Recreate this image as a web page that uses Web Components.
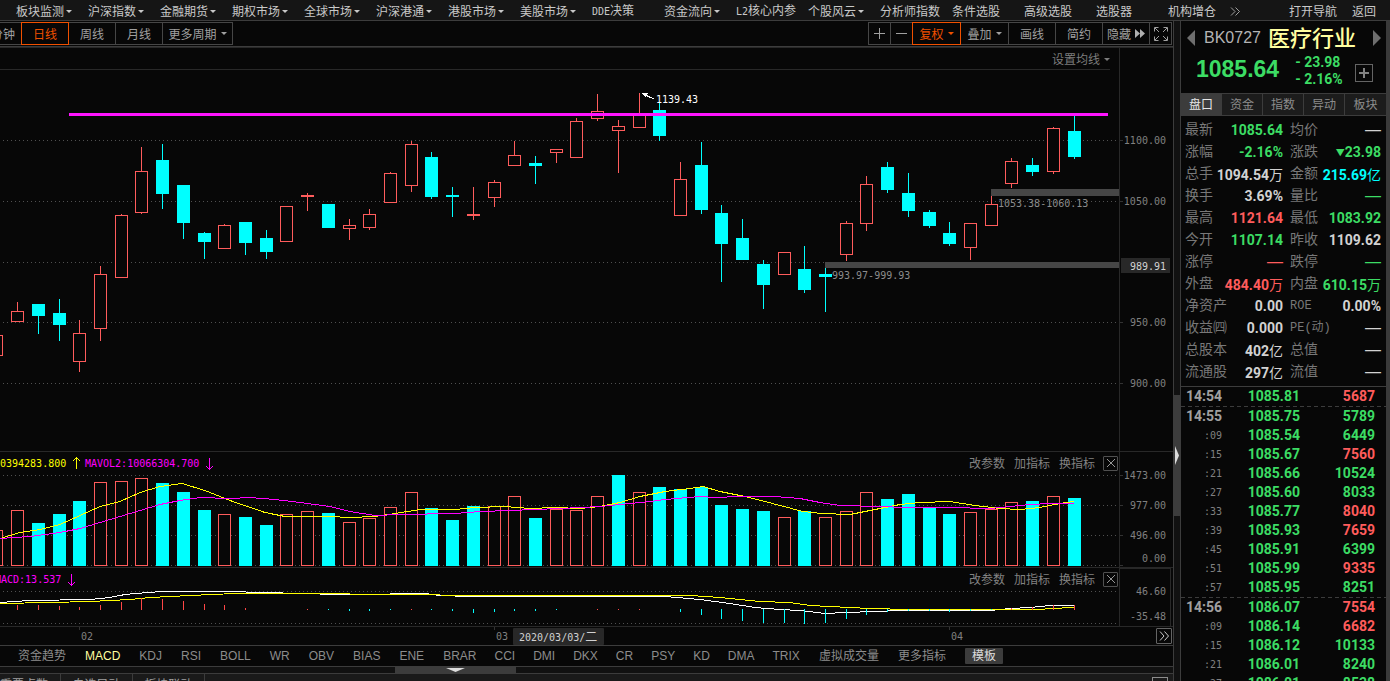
<!DOCTYPE html>
<html lang="zh-CN">
<head>
<meta charset="utf-8">
<title>医疗行业 BK0727</title>
<style>
  html, body { margin: 0; height: 100%; background: #070707; overflow: hidden; }
  body {
    font: 12px/16px "Noto Sans CJK SC", sans-serif;
    color: #a0a0a0;
    --line: #3c3c3c; --line2: #282828; --up: #ff5c5c; --down: #3cdc64; --cyan: #00ffff;
    --orange: #f05000; --num: "DejaVu Sans Mono", monospace; --bold: Roboto, "Noto Sans CJK SC", sans-serif;
  }
</style>
</head>
<body>
<trade-app></trade-app>
<script>
const define = (name, css, html, setup) => {
  customElements.define(name, class extends HTMLElement {
    constructor() {
      super();
      const root = this.attachShadow({ mode: 'open' });
      root.innerHTML = `<style>
        :host{display:block;box-sizing:border-box}
        *{box-sizing:border-box}
        button{font:inherit;color:inherit;background:none;border:0;padding:0;margin:0;white-space:nowrap}
        a{color:inherit;text-decoration:none;white-space:nowrap}
        svg{display:block}
        svg text{font:10px var(--num);white-space:pre}
        .lat{font-family:var(--num);font-size:10px}
        ${css}</style>${typeof html === 'function' ? html(this) : html}`;
      if (setup) setup(root, this);
    }
  });
};
const latin = t => t.replace(/^[A-Z0-9]+/, m => `<span class="lat">${m}</span>`);

/* small drop-down arrow */
define('drop-caret', ':host{flex:none;width:0;height:0;border:3px solid transparent;border-top-color:currentColor;border-bottom:0}', '');

/* main menu */
const MENU = ['板块监测▾','沪深指数▾','金融期货▾','期权市场▾','全球市场▾','沪深港通▾','港股市场▾','美股市场▾','DDE决策','资金流向▾','L2核心内参','个股风云▾','分析师指数','条件选股','高级选股','选股器','机构增仓'];
define('top-menu', `
  :host{height:21px;background:#151515;border-bottom:1px solid var(--line);color:#c8c8c8}
  nav{display:flex;height:20px;align-items:center;padding:2px 14px 0 16px}
  a{flex:0 0 72px;display:flex;align-items:center;gap:2px}
  a:nth-of-type(17){flex-basis:62px}
  .more{flex:1;display:flex}
  .end{flex:none;margin-left:15px}`,
  `<nav>${MENU.map(m => `<a href="#"><span>${latin(m.replace('▾',''))}</span>${m.endsWith('▾') ? '<drop-caret></drop-caret>' : ''}</a>`).join('')}
   <button class="more" aria-label="更多"><svg width="10" height="9" fill="none" stroke="#a0a0a0"><path d="M1 .5l4 4-4 4M5.500 .5l4 4-4 4"/></svg></button>
   <a class="end" href="#">打开导航</a><a class="end" href="#">返回</a></nav>`);

/* period switch and chart tools */
define('period-bar', `
  :host{height:27px;border-bottom:1px solid var(--line2);display:flex;justify-content:space-between;padding:1px 1px 0 0;overflow:hidden;background:#070707}
  :host{box-shadow:inset 0 -1px 0 var(--line)}
  div{display:flex}
  button{height:23px;border:1px solid #464646;width:48px;margin-left:-1px;display:flex;align-items:center;justify-content:center;position:relative;gap:4px}
  .on{color:var(--orange);border-color:var(--orange);z-index:1}
  .w23{width:23px}.w49{width:49px}.w71{width:71px}
  .cut{width:23px;justify-content:flex-end;padding-right:6px}`,
  `<div><button class="cut">分钟</button><button class="on">日线</button><button>周线</button><button>月线</button><button class="w71">更多周期<drop-caret></drop-caret></button></div>
   <div><button class="w23" aria-label="放大"><svg width="11" height="11" stroke="#a0a0a0"><path d="M0 5.500h11M5.500 0v11"/></svg></button>
   <button class="w23" aria-label="缩小"><svg width="11" height="11" stroke="#a0a0a0"><path d="M0 5.500h11"/></svg></button>
   <button class="on w49">复权<drop-caret></drop-caret></button><button class="w49">叠加<drop-caret></drop-caret></button><button>画线</button><button>简约</button>
   <button>隐藏<svg width="10" height="9" fill="#b0b0b0"><path d="M0 0l5 4.500-5 4.500zM5 0l5 4.500-5 4.500z"/></svg></button>
   <button class="w23" aria-label="全屏"><svg width="14" height="14" fill="none" stroke="#a0a0a0"><path d="M.5 4.500v-4h4M9.500 .5h4v4M13.500 9.500v4h-4M4.500 13.500h-4v-4M1 1l4 4M13 1l-4 4M13 13l-4-4M1 13l4-4"/></svg></button></div>`);

/* chart data: x, body top, body bottom, high, low */
const CANDLES = [
[-10,335,356,335,356],[11,311,322,302,322],[32,304,316,304,334],[53,313,325,299,341],[73,333,362,320,372],[94,274,329,266,341],
[115,215,278,214,278],[135,171,213,147,214],[156,160,194,144,209],[177,185,223,185,239],[198,233,242,232,259],[218,225,249,224,249],
[239,222,243,222,255],[260,238,252,230,259],[280,206,242,206,242],[301,195,197,193,211],[322,204,228,204,228],[343,225,229,219,240],
[363,214,228,209,230],[384,173,203,172,203],[405,144,186,141,192],[425,157,197,152,199],[446,195,197,187,217],[467,214,216,187,220],
[488,182,198,180,207],[508,155,166,141,166],[529,163,166,156,184],[550,149,153,149,163],[570,121,158,118,158],[591,111,119,94,121],
[612,126,131,120,173],[633,114,128,93,128],[653,110,136,103,141],[674,179,216,162,216],[695,165,210,142,214],[715,213,244,205,282],
[736,238,260,219,260],[757,264,285,260,309],[778,252,275,252,275],[798,269,290,246,293],[819,274,277,268,312],[840,223,255,221,261],
[860,184,224,176,231],[881,167,190,162,193],[902,193,211,173,217],[923,212,226,210,228],[943,233,244,222,246],[964,223,248,223,260],
[985,204,226,196,226],[1005,161,184,158,188],[1026,165,172,158,176],[1047,128,172,127,174],[1068,131,157,116,159]];
const KIND = 'RRCCRRRRCCCRCCRRCRRRRCCRRRCRRRRRCRCCCCRCCRRCCCCRRRCRC';
const VOL = [530,510,523,514,501,482,481,478,483,492,510,514,517,525,514,511,513,522,518,507,492,508,520,506,506,496,518,509,510,496,475,492,487,489,487,505,509,511,517,511,517,511,492,499,494,508,514,512,509,502,501,496,498];
const VKIND = 'RRCCCRRRCCCRCCRRCRRRRCCCRRCRRRCRCCCCCCRCRRRCCCCRRRCRC';
const RED = '#ff5c5c', CY = '#00ffff';
const box = (x, t, b, c) => c === 'C' ? `<rect x="${x}" y="${t}" width="13" height="${b - t}" fill="${CY}"/>`
  : `<rect x="${x + .5}" y="${t + .5}" width="12" height="${b - t - 1}" fill="#070707" stroke="${RED}"/>`;
const grid = ys => ys.map(y => `<line x1="3" x2="100%" y1="${y + .5}" y2="${y + .5}" stroke="#505050" stroke-dasharray="1 3"/>`).join('');
const poly = (pts, c) => `<polyline points="${pts}" fill="none" stroke="${c}"/>`;
const axisText = rows => rows.map(([y, t]) => `<text x="46" y="${y + 4}" text-anchor="end" fill="#808080">${t}</text>`).join('');
const ticks = ys => ys.map(y => `<path d="M0 ${y + .5}h3" stroke="#323232"/>`).join('');
const paneCss = `
  :host{display:grid;grid-template-columns:minmax(0,1fr) 54px;position:relative;min-height:0;overflow:hidden}
  svg{width:100%;height:100%;shape-rendering:crispEdges}
  .axis{border-left:1px solid var(--line2);min-width:0}`;

define('price-pane', paneCss + `
  button{position:absolute;top:3px;right:63px;display:flex;align-items:center;gap:4px;color:#7d7d7d}`,
  () => `<svg><g transform="translate(0,-48)"><path d="M0 69.500H1110" stroke="#282828"/>${grid([140,201,262,322,383])}
  ${CANDLES.map(([x, t, b, h, l], i) => `<rect x="${x + 6}" y="${h}" width="1" height="${l - h}" fill="${KIND[i] === 'C' ? CY : RED}"/>` + box(x, t, b, KIND[i])).join('')}
  <rect x="991" y="189" width="100%" height="7" fill="#464646"/><rect x="825" y="262" width="100%" height="6" fill="#464646"/>
  <text x="998" y="207" fill="#8c8c8c">1053.38-1060.13</text><text x="832" y="279" fill="#8c8c8c">993.97-999.93</text>
  <rect x="69" y="113" width="1039" height="3" fill="#ff14ff"/>
  <path d="M643 94l11 5" stroke="#fff"/><path d="M641 93h7l-2 4z" fill="#fff"/><text x="656" y="103" fill="#fff">1139.43</text></g></svg>
  <div class="axis"><svg><g transform="translate(0,-48)">${ticks([140,201,322,383])}${axisText([[140,'1100.00'],[201,'1050.00'],[322,'950.00'],[383,'900.00']])}
  <rect x="1" y="258" width="49" height="15" rx="1" fill="#282828"/><text x="46" y="270" text-anchor="end" fill="#d2d2d2">989.91</text></g></svg></div>
  <button>设置均线<drop-caret></drop-caret></button>`);

/* 改参数 / 加指标 / 换指标 controls over an indicator pane */
define('pane-tools', `
  :host{position:absolute;top:3px;right:55px;display:flex;align-items:center;gap:9px;color:#828282}
  .x{width:15px;height:15px;border:1px solid #505050;border-radius:1px;display:grid;place-items:center;margin-left:-1px}`,
  `<button>改参数</button><button>加指标</button><button>换指标</button><button class="x" aria-label="关闭"><svg width="8" height="8" stroke="#969696"><path d="M0 0l8 8M8 0l-8 8"/></svg></button>`);

const arrow = (x, y, c, down) => `<path transform="translate(${x},${y})" d="M.5 0v12M${down ? '-3 8l3.500 3.500 3.500-3.500' : '-3 4l3.500-3.500 3.500 3.500'}" fill="none" stroke="${c}"/>`;
define('volume-pane', paneCss + ':host{border-top:1px solid var(--line2)}',
  () => `<svg><g transform="translate(0,-452)">${grid([475,505,535,565])}
  ${VOL.map((t, i) => box(CANDLES[i][0], t, 566, VKIND[i])).join('')}
  ${poly('0,538.5 20,532.5 40,529.5 60,524.5 80,515.5 100,506.5 120,501.5 140,492.5 160,486.5 182,483.5 205,490.5 230,500.5 265,512.5 285,516.5 330,516.5 350,517.5 375,516.5 395,513.5 420,509.5 455,509.5 475,507.5 505,506.5 530,508.5 555,507.5 580,508.5 590,507.5 600,506.5 620,502.5 640,496.5 665,491.5 690,488.5 703,486.5 720,491.5 745,496.5 765,501.5 780,505.5 803,511.5 822,513.5 850,514.5 875,509.5 900,504.5 920,502.5 950,501.5 975,505.5 1000,508.5 1020,509.5 1040,507.5 1060,503.5 1074,501.5', '#ffff00')}
  ${poly('0,538.5 30,536.5 60,532.5 80,528.5 100,522.5 120,516.5 140,510.5 160,504.5 180,500.5 200,497.5 230,498.5 250,497.5 275,499.5 300,502.5 330,506.5 350,511.5 375,515.5 400,514.5 455,513.5 480,511.5 510,510.5 560,508.5 600,506.5 620,504.5 650,501.5 665,499.5 700,496.5 715,497.5 740,496.5 775,496.5 800,498.5 820,502.5 840,505.5 880,506.5 905,507.5 950,507.5 990,508.5 1010,506.5 1030,504.5 1050,503.5 1074,503.5', '#ff00ff')}
  <text x="0" y="467" fill="#ffff00">0394283.800</text>${arrow(76,457,'#ffff00')}
  <text x="85" y="467" fill="#ff00ff">MAVOL2:10066304.700</text>${arrow(209,458,'#ff00ff',1)}</g></svg>
  <div class="axis"><svg><g transform="translate(0,-452)">${ticks([475,505,535,565])}${axisText([[475,'1473.00'],[505,'977.00'],[535,'496.00'],[558,'0.00']])}</g></svg></div><pane-tools></pane-tools>`);

const MR = [[17,605,610],[38,605,610],[59,606,610],[79,607,610],[100,605,610],[121,602,610],[141,598,610],[162,599,610],[183,601,610],[204,604,610],[224,605,610],[245,608,610],[307,609,610],[411,609,610],[597,609,610],[618,609,610],[639,609,610],[1011,608,610],[1032,607,610],[1053,605,610],[1074,605,610]];
const MC = [[328,610],[349,611],[369,611],[390,610],[431,610],[452,611],[473,613],[494,612],[514,611],[535,611],[556,610],[680,612],[701,615],[721,619],[742,621],[763,623],[784,623],[804,624],[825,623],[846,619],[866,615],[887,612],[908,611],[929,611],[949,612],[970,611],[991,610]];
define('macd-pane', paneCss + ':host{border-top:1px solid var(--line2)} .axis{border:1px solid var(--line2);margin:0 2px 2px 0}',
  () => `<svg><g transform="translate(0,-568)">${grid([591,623])}
  ${poly('0,602.5 30,600.5 90,599.5 110,597.5 125,594.5 135,593.5 150,592.5 160,591.5 235,591.5 256,592.5 310,593.5 330,594.5 380,594.5 400,593.5 425,593.5 440,595.5 470,596.5 560,596.5 665,596.5 700,599.5 730,603.5 755,607.5 780,609.5 800,610.5 825,613.5 845,612.5 875,611.5 900,610.5 990,610.5 1010,608.5 1030,607.5 1050,605.5 1074,605.5', '#fff')}
  ${poly('0,603.5 50,602.5 90,601.5 130,599.5 150,597.5 190,595.5 235,593.5 300,593.5 400,594.5 480,595.5 690,595.5 720,597.5 740,599.5 760,601.5 790,602.5 810,605.5 850,607.5 870,608.5 910,609.5 1040,609.5 1050,608.5 1074,607.5', '#ffff00')}
  ${MR.map(([x, a, b]) => `<rect x="${x}" y="${a}" width="1" height="${b - a}" fill="#ff4646"/>`).join('')}
  ${MC.map(([x, b]) => `<rect x="${x}" y="609" width="1" height="${b - 609}" fill="${CY}"/>`).join('')}
  <text x="-5" y="583" fill="#ff00ff">MACD:13.537</text>${arrow(71,574,'#ff00ff',1)}</g></svg>
  <div class="axis"><svg><g transform="translate(0,-569)">${axisText([[591,'46.60'],[616,'-35.48']])}</g></svg></div><pane-tools></pane-tools>`);

define('date-axis', `
  :host{height:19px;border-top:1px solid var(--line2);position:relative}
  svg{width:100%;height:18px}
  button{position:absolute;right:1px;top:1px;width:16px;height:16px;border:1px solid #646464;border-radius:1px;display:grid;place-items:center}
  button svg{width:10px;height:10px}`,
  `<svg>${[[79,'02'],[494,'03'],[949,'04']].map(([x, t]) => `<path d="M${x + .5} 0v3" stroke="#323232"/><text x="${x + 2}" y="13" fill="#808080">${t}</text>`).join('')}
   <rect x="513" y="1" width="91" height="17" rx="1" fill="#282828"/><text x="519" y="14" fill="#d2d2d2">2020/03/03/<tspan font-size="12" font-family="Noto Sans CJK SC">二</tspan></text></svg>
   <button aria-label="展开"><svg fill="none" stroke="#c8c8c8"><path d="M1 .5l4 4.500-4 4.500M5.500 .5l4 4.500-4 4.500"/></svg></button>`);

const TAB_GROUPS = [['资金趋势','MACD','KDJ','RSI','BOLL','WR','OBV','BIAS','ENE'],['BRAR','CCI','DMI','DKX','CR','PSY','KD','DMA','TRIX'],['虚拟成交量','更多指标','模板']];
define('indicator-tabs', `
  :host{height:21px;border-top:1px solid var(--line);display:flex;align-items:center;gap:19px;padding-left:18px;overflow:hidden;font-family:"Liberation Sans","Noto Sans CJK SC",sans-serif;color:#8c8c8c}
  div{display:flex;gap:19px}
  .g1{gap:18px}
  .on{color:#ffffa0}
  .tpl{background:#3c3c3c;color:#dcdcdc;padding:0 7px;border-radius:1px}`,
  TAB_GROUPS.map((g, i) => `<div class="g${i}">${g.map(t => `<button class="${t === 'MACD' ? 'on' : t === '模板' ? 'tpl' : ''}">${t}</button>`).join('')}</div>`).join(''));

define('pane-scroll', `
  :host{height:7px;border-top:1px solid var(--line);background:#111;padding-left:395px}
  div{width:121px;height:6px;background:#3c3c3c;display:grid;place-items:center}`,
  `<div><svg width="19" height="4" fill="#dcdcdc"><path d="M0 0h19l-9.500 4z"/></svg></div>`);

define('bottom-tabs', `
  :host{height:8px;border-top:1px solid var(--line);background:#1a1a1a;display:flex;overflow:hidden}
  button{width:72px;height:20px;border-right:1px solid var(--line);flex:none}
  button:first-of-type{width:61px;padding-right:12px}
  i{margin-left:auto;margin-right:5px;margin-top:3px;width:16px;height:12px;border:1px solid #8c8c8c}`,
  `<button>重要点数</button><button>自选异动</button><button>板块联动</button><i></i>`);

define('side-splitter', `
  :host{background:#111;display:flex;flex-direction:column}
  .a{flex:374 0 0}.b{flex:121 0 0;background:#3c3c3c;display:flex;align-items:center;padding-left:1px}.c{flex:165 0 0}`,
  `<div class="a"></div><div class="b"><svg width="4" height="19" fill="#dcdcdc"><path d="M0 0l4 9.500-4 9.500z"/></svg></div><div class="c"></div>`);

/* quote header */
define('quote-head', `
  :host{height:72px;padding:0 5px 0 6px;display:grid;grid-template-rows:34px 38px}
  .r{display:flex;align-items:center}
  .low{align-items:flex-start}
  .code{font:16px/20px "Liberation Sans",sans-serif;color:#b4b4b4;margin-left:9px}
  .name{font-size:22px;line-height:26px;padding-bottom:4px;color:#ffffa0;margin-left:7px;font-weight:500;white-space:nowrap}
  .nx{margin-left:auto}
  .p{font:bold 23px/28px "Liberation Sans",sans-serif;color:var(--down);margin-left:9px}
  .d{font:bold 14px/17px var(--bold);color:var(--down);margin-left:16px;display:grid;grid-template-columns:9px auto;margin-top:-1px}
  .add{width:18px;height:18px;border:1px solid #646464;display:grid;place-items:center;margin-left:auto;margin-right:8px;margin-top:9px}`,
  `<div class="r"><button aria-label="上一个"><svg width="8" height="16" fill="#6e6e6e"><path d="M8 0v16L0 8z"/></svg></button><span class="code">BK0727</span><span class="name">医疗行业</span>
   <button class="nx" aria-label="下一个"><svg width="8" height="16" fill="#6e6e6e"><path d="M0 0v16l8-8z"/></svg></button></div>
   <div class="r low"><span class="p">1085.64</span><span class="d"><span>-</span><span>23.98</span><span>-</span><span>2.16%</span></span>
   <button class="add" aria-label="加自选"><svg width="10" height="10" stroke="#828282" stroke-width="2"><path d="M0 5h10M5 0v10"/></svg></button></div>`);

define('quote-tabs', `
  :host{height:23px;border-top:1px solid var(--line);border-bottom:1px solid var(--line);display:grid;grid-template-columns:repeat(5,1fr);background:#1c1c1c;color:#8c8c8c}
  button{border-right:1px solid var(--line);padding-bottom:1px} button:last-child{border-right:0}
  .on{background:#3c3c3c;color:#e6e6e6}`,
  `<button class="on">盘口</button><button>资金</button><button>指数</button><button>异动</button><button>板块</button>`);

const STATS = [
['最新','1085.64','g','均价','—','w'],['涨幅','-2.16%','g','涨跌','▼23.98','g'],['总手','1094.54万','w','金额','215.69亿','c'],['换手','3.69%','w','量比','—','g'],
['最高','1121.64','r','最低','1083.92','g'],['今开','1107.14','g','昨收','1109.62','w'],['涨停','—','r','跌停','—','g'],['外盘','484.40万','r','内盘','610.15万','g'],
['净资产','0.00','w','ROE','0.00%','w'],['收益㈣','0.000','w','PE(动)','—','w'],['总股本','402亿','w','总值','—','w'],['流通股','297亿','w','流值','—','w']];
const val = v => v === '—' ? '<span class="e">—</span>' : v.replace('▼', '<span class="t">▼</span>').replace(/[万亿]/, m => `<span class="n">${m}</span>`);
define('quote-stats', `
  :host{padding:3px 0;border-bottom:1px solid var(--line)}
  table{border-collapse:collapse;table-layout:fixed;width:100%}
  tr{height:22px} th,td{padding:0;height:22px;line-height:20px;white-space:nowrap}
  th{font:14px/22px "Liberation Mono","Noto Sans CJK SC",sans-serif;color:#787878;text-align:left;padding-left:4px;width:35px}
  th.s{padding-left:7px;width:37px} td.v1{width:67px} td:last-child{padding-right:5px}
  td{font:bold 14px/20px var(--bold);text-align:right}
  .n{font-weight:400;font-family:"Noto Sans CJK SC"} .t{font-size:9px;vertical-align:1px}
  .e{font:16px/20px "Liberation Sans",sans-serif}
  th.m{font-size:12px}
  .g{color:var(--down)}.r{color:var(--up)}.c{color:var(--cyan)}.w{color:#d2d2d2}`,
  `<table>${STATS.map(([a, b, c, d, e, f]) => `<tr><th scope="row">${a}</th><td class="v1 ${c}">${val(b)}</td><th class="s ${/^[A-Z]/.test(d) ? 'm' : ''}" scope="row">${d}</th><td class="${f}">${val(e)}</td></tr>`).join('')}</table>`);

const DEALS = ['14:54 1085.81 5687 r','14:55 1085.75 5789 g',':09 1085.54 6449 g',':15 1085.67 7560 r',':21 1085.66 10524 g',':27 1085.60 8033 g',':33 1085.77 8040 r',':39 1085.93 7659 r',':45 1085.91 6399 g',':51 1085.99 9335 r',':57 1085.95 8251 g','14:56 1086.07 7554 r',':09 1086.14 6682 r',':15 1086.12 10133 g',':21 1086.01 8240 g',':27 1086.01 8538 g'];
define('deal-list', `
  :host{overflow:hidden;min-height:0}
  table{border-collapse:separate;border-spacing:0;table-layout:fixed;width:100%}
  td{height:19px;padding:0;font:bold 14px/19px var(--bold);text-align:right;color:var(--down)}
  .t{color:#a0a0a0} .v{padding-right:11px} .v.r{color:var(--up)}
  .c1{width:41px}.c2{width:78px}
  .s{font:10px/19px var(--num);color:#808080}
  .sep td{height:1px;line-height:0;background:repeating-linear-gradient(90deg,#3c3c3c 0 4px,transparent 4px 7px)}`,
  `<table><colgroup><col class="c1"><col class="c2"><col></colgroup>${DEALS.map(r => { const [t, p, v, c] = r.split(' ');
    return (/^14:5[56]/.test(t) ? '<tr class="sep"><td colspan="3"></td></tr>' : '') +
      `<tr><td class="t ${t[0] === ':' ? 's' : ''}">${t}</td><td>${p}</td><td class="v ${c}">${v}</td></tr>`; }).join('')}</table>`);

define('chart-column', `
  :host{display:grid;grid-template-rows:27px minmax(0,1fr) 116px 59px 19px 21px 7px 8px;border-right:1px solid var(--line);min-width:0;overflow:hidden}`,
  '<period-bar></period-bar><price-pane></price-pane><volume-pane></volume-pane><macd-pane></macd-pane><date-axis></date-axis><indicator-tabs></indicator-tabs><pane-scroll></pane-scroll><bottom-tabs></bottom-tabs>');
define('quote-column', `
  :host{display:grid;grid-template-rows:auto auto auto minmax(0,1fr);border-left:1px solid var(--line);min-width:0;overflow:hidden}`,
  '<quote-head></quote-head><quote-tabs></quote-tabs><quote-stats></quote-stats><deal-list></deal-list>');
define('trade-app', `
  :host{height:100vh;display:grid;grid-template-rows:21px minmax(0,1fr)}
  main{display:grid;grid-template-columns:minmax(0,1fr) 6px 206px 4px;min-height:0}
  .edge{background:#3a3a3a}`,
  '<top-menu></top-menu><main><chart-column></chart-column><side-splitter></side-splitter><quote-column></quote-column><div class="edge"></div></main>');
</script>
</body>
</html>
